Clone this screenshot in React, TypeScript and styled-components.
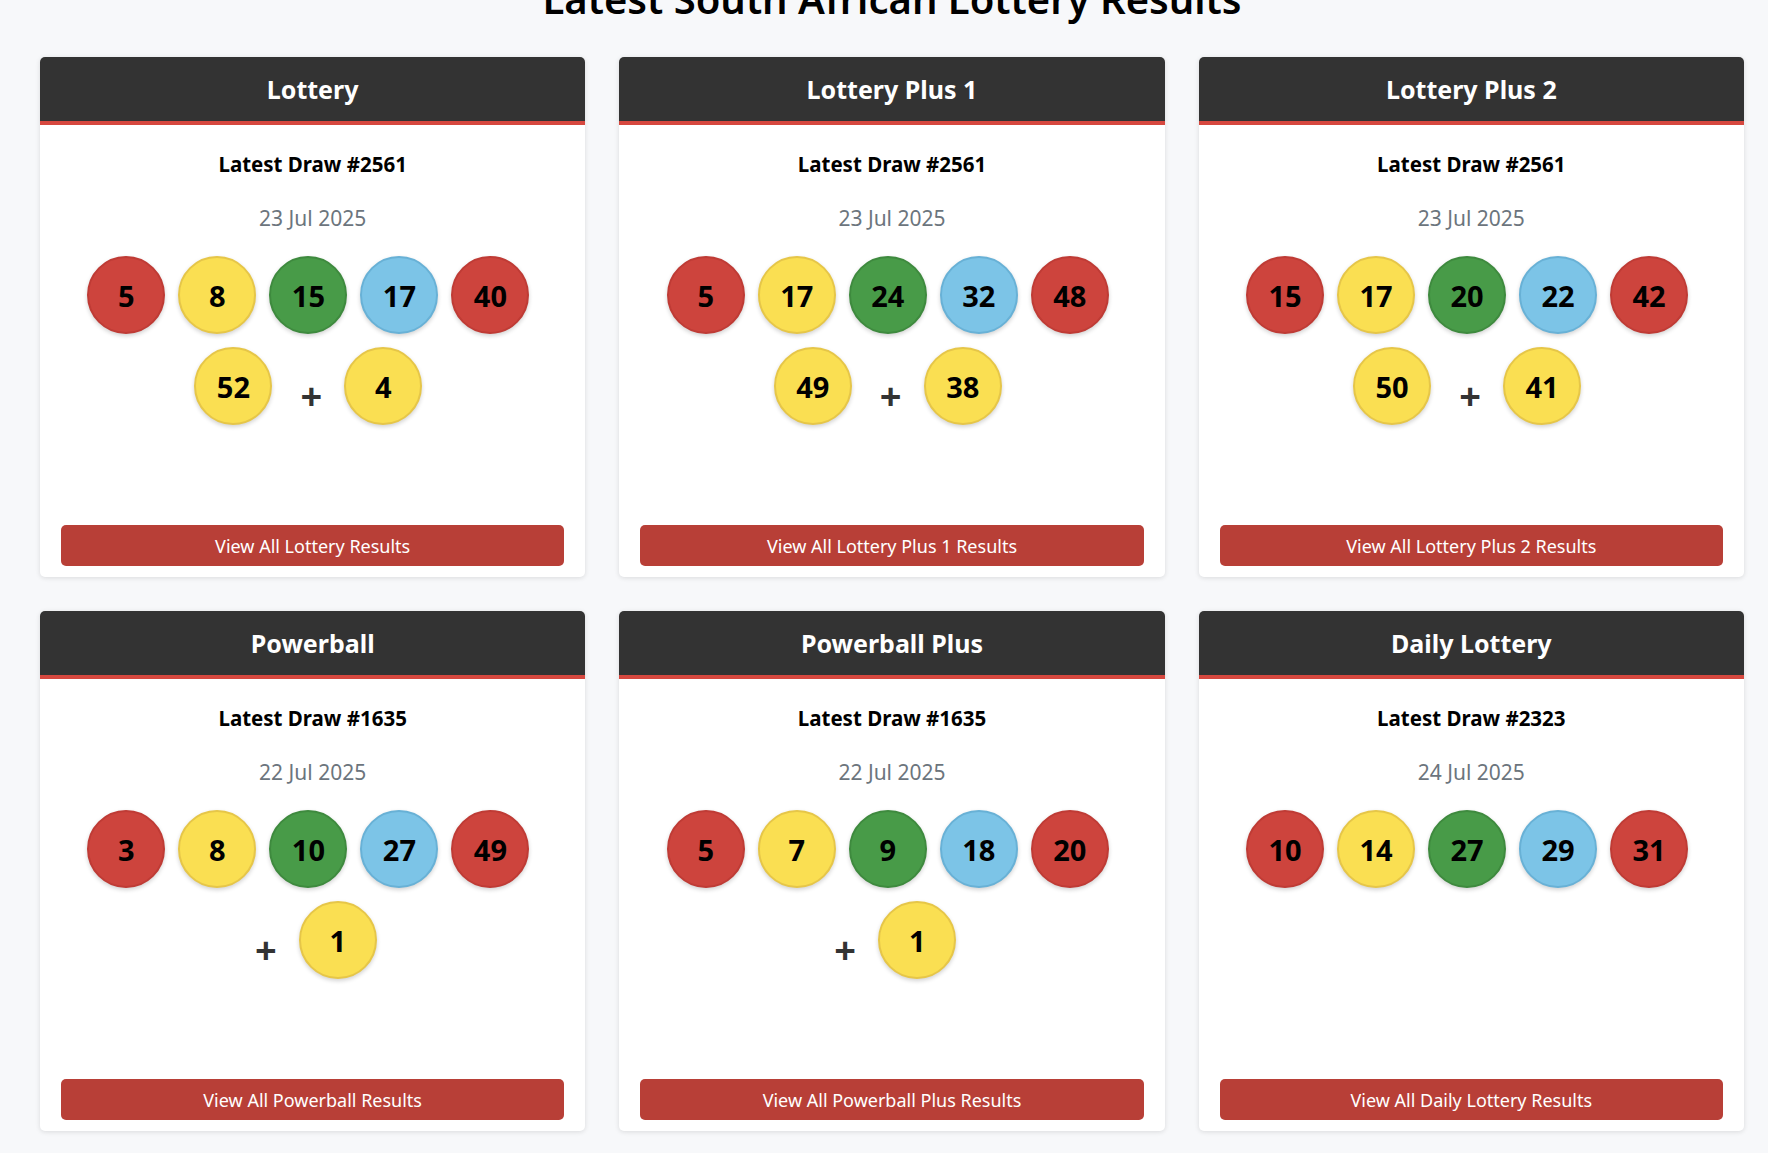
import React from "react";
import styled, { createGlobalStyle } from "styled-components";

type BallColor = "red" | "yellow" | "green" | "blue";

interface Draw {
  name: string;
  drawNo: number;
  date: string;
  main: number[];
  bonus?: number;
  link: string;
}

const draws: Draw[] = [
  { name: "Lottery", drawNo: 2561, date: "23 Jul 2025", main: [5, 8, 15, 17, 40, 52], bonus: 4, link: "View All Lottery Results" },
  { name: "Lottery Plus 1", drawNo: 2561, date: "23 Jul 2025", main: [5, 17, 24, 32, 48, 49], bonus: 38, link: "View All Lottery Plus 1 Results" },
  { name: "Lottery Plus 2", drawNo: 2561, date: "23 Jul 2025", main: [15, 17, 20, 22, 42, 50], bonus: 41, link: "View All Lottery Plus 2 Results" },
  { name: "Powerball", drawNo: 1635, date: "22 Jul 2025", main: [3, 8, 10, 27, 49], bonus: 1, link: "View All Powerball Results" },
  { name: "Powerball Plus", drawNo: 1635, date: "22 Jul 2025", main: [5, 7, 9, 18, 20], bonus: 1, link: "View All Powerball Plus Results" },
  { name: "Daily Lottery", drawNo: 2323, date: "24 Jul 2025", main: [10, 14, 27, 29, 31], link: "View All Daily Lottery Results" },
];

const order: BallColor[] = ["red", "yellow", "green", "blue", "red", "yellow"];

const palette: Record<BallColor, { bg: string; border: string }> = {
  red: { bg: "#cd443d", border: "#bf3b35" },
  yellow: { bg: "#fadf52", border: "#e6c648" },
  green: { bg: "#489b48", border: "#3e8a3e" },
  blue: { bg: "#7cc4e7", border: "#68b1d6" },
};

const GlobalStyle = createGlobalStyle`
  html, body {
    margin: 0;
    padding: 0;
    background: #f7f8fa;
  }
  body {
    font-family: "Noto Sans", "Open Sans", sans-serif;
    color: #000;
  }
  * { box-sizing: border-box; }
`;

const Page = styled.main`
  padding: 0 24px 22px 40px;
`;

const Title = styled.h1`
  margin: -25px 0 34px;
  font-size: 40px;
  line-height: 48px;
  font-weight: 600;
  text-align: center;
  color: #000;
`;

const Grid = styled.div`
  display: grid;
  grid-template-columns: repeat(3, 1fr);
  gap: 34px;
`;

const Card = styled.section`
  height: 520px;
  background: #fff;
  border-radius: 5px;
  box-shadow: 0 1px 5px rgba(0, 0, 0, 0.12);
  overflow: hidden;
  display: flex;
  flex-direction: column;
`;

const CardHeader = styled.header`
  height: 68px;
  background: #333333;
  border-bottom: 4px solid #d6483f;
  color: #fff;
  display: flex;
  align-items: center;
  justify-content: center;
  font-size: 25px;
  font-weight: 700;
`;

const CardBody = styled.div`
  flex: 1;
  display: flex;
  flex-direction: column;
  align-items: stretch;
  padding: 27px 21px 11px;
`;

const DrawTitle = styled.div`
  font-size: 20.5px;
  line-height: 24px;
  font-weight: 700;
  text-align: center;
  color: #000;
`;

const DrawDate = styled.div`
  margin-top: 30px;
  font-size: 21px;
  line-height: 24px;
  text-align: center;
  color: #6c757d;
`;

const Balls = styled.div`
  margin-top: 26px;
  display: flex;
  flex-wrap: wrap;
  justify-content: center;
  gap: 13px 13px;
  padding-right: 8.5px;
`;

const Ball = styled.span<{ $color: BallColor }>`
  width: 78px;
  height: 78px;
  border-radius: 50%;
  background: ${(p) => palette[p.$color].bg};
  border: 2px solid ${(p) => palette[p.$color].border};
  box-shadow: 0 2px 4px rgba(0, 0, 0, 0.18);
  display: flex;
  align-items: center;
  justify-content: center;
  font-size: 29px;
  font-weight: 700;
  color: #000;
`;

const Plus = styled.span`
  width: 46px;
  height: 78px;
  padding: 18px 0 0 6px;
  display: flex;
  align-items: center;
  justify-content: center;
  font-size: 38px;
  font-weight: 700;
  color: #333;
`;

const ViewButton = styled.a`
  margin-top: auto;
  height: 41px;
  border-radius: 5px;
  background: #b83f37;
  color: #fff;
  display: flex;
  align-items: center;
  justify-content: center;
  font-size: 18px;
  text-decoration: none;
  cursor: pointer;
`;

function DrawCard({ d }: { d: Draw }) {
  return (
    <Card>
      <CardHeader>{d.name}</CardHeader>
      <CardBody>
        <DrawTitle>Latest Draw #{d.drawNo}</DrawTitle>
        <DrawDate>{d.date}</DrawDate>
        <Balls>
          {d.main.map((n, i) => (
            <Ball key={i} $color={order[i]}>
              {n}
            </Ball>
          ))}
          {d.bonus !== undefined && (
            <>
              <Plus>+</Plus>
              <Ball $color="yellow">{d.bonus}</Ball>
            </>
          )}
        </Balls>
        <ViewButton>{d.link}</ViewButton>
      </CardBody>
    </Card>
  );
}

export default function App() {
  return (
    <>
      <GlobalStyle />
      <Page>
        <Title>Latest South African Lottery Results</Title>
        <Grid>
          {draws.map((d) => (
            <DrawCard key={d.name} d={d} />
          ))}
        </Grid>
      </Page>
    </>
  );
}
